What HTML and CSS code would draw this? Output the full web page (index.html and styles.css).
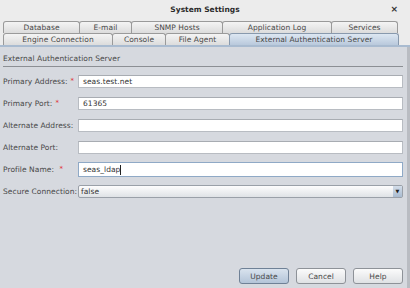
FILE: index.html
```html
<!DOCTYPE html>
<html>
<head>
<meta charset="utf-8">
<title>System Settings</title>
<link rel="stylesheet" href="styles.css">
</head>
<body>
<div class="win">
	<div class="titlebar">
		<span class="title">System Settings</span>
		<span class="close">&times;</span>
	</div>
	<div class="tabs">
		<div class="tabrow">
			<div class="tab" style="width:77px">Database</div>
			<div class="tab" style="width:53px">E-mail</div>
			<div class="tab" style="width:92px">SNMP Hosts</div>
			<div class="tab" style="width:110px">Application Log</div>
			<div class="tab" style="width:67px">Services</div>
		</div>
		<div class="tabrow">
			<div class="tab" style="width:110px">Engine Connection</div>
			<div class="tab" style="width:54px">Console</div>
			<div class="tab" style="width:65px">File Agent</div>
			<div class="tab sel" style="width:170px">External Authentication Server</div>
		</div>
	</div>
	<div class="panel">
		<div class="heading">External Authentication Server</div>
		<div class="form">
			<label>Primary Address:<span class="req">*</span></label>
			<div class="field">seas.test.net</div>
			<label>Primary Port:<span class="req">*</span></label>
			<div class="field">61365</div>
			<label>Alternate Address:</label>
			<div class="field"></div>
			<label>Alternate Port:</label>
			<div class="field"></div>
			<label>Profile Name: <span class="req">*</span></label>
			<div class="field focus">seas_ldap<span class="caret"></span></div>
			<label>Secure Connection:</label>
			<div class="combo">false<span class="arrow">&#9660;</span></div>
		</div>
		<div class="buttons">
			<button class="btn def">Update</button>
			<button class="btn">Cancel</button>
			<button class="btn">Help</button>
		</div>
	</div>
</div>
</body>
</html>
```
FILE: styles.css
```css
html, body {
	margin: 0;
	padding: 0;
}
body {
	width: 410px;
	height: 288px;
	overflow: hidden;
	font-family: "DejaVu Sans", sans-serif;
	font-size: 7.5px;
	letter-spacing: 0.05px;
	color: #444;
	background: #ececec;
}
.win {
	height: 288px;
	display: flex;
	flex-direction: column;
}
.titlebar {
	height: 20px;
	position: relative;
	display: flex;
	align-items: center;
	justify-content: center;
	background: #ececec;
}
.title {
	font-weight: bold;
	font-size: 7.5px;
	letter-spacing: 0;
	color: #2a2a2a;
	margin-top: -2px;
}
.close {
	position: absolute;
	right: 12px;
	top: 4px;
	font-size: 9px;
	font-weight: bold;
	color: #333;
}
.tabs {
	padding: 1px 0 0 3px;
	border-bottom: 2px solid #a9bbd0;
}
.tabrow {
	display: flex;
	height: 12px;
}
.tab {
	box-sizing: border-box;
	height: 12px;
	border: 1px solid #9a9a9a;
	border-bottom: none;
	border-radius: 3px 3px 0 0;
	background: linear-gradient(#f4f4f4, #dcdcdc);
	text-align: center;
	line-height: 11px;
	color: #484848;
	margin-right: -1px;
	white-space: nowrap;
}
.tab.sel {
	background: linear-gradient(#dde7f2, #b9c9dc);
	border-color: #8899ad;
}
.panel {
	flex: 1;
	background: #d6d9df;
	border-right: 3px solid #b9bcc2;
	padding: 0 4px 0 3px;
	display: flex;
	flex-direction: column;
}
.heading {
	height: 19px;
	line-height: 23px;
	border-bottom: 1px solid #8c8f94;
	color: #484848;
	margin-bottom: 8px;
}
.form {
	display: grid;
	grid-template-columns: 75px 1fr;
	row-gap: 9px;
	align-items: center;
}
label {
	color: #484848;
	white-space: nowrap;
}
.req {
	color: #e03030;
	margin-left: 3px;
	font-size: 7px;
	vertical-align: top;
}
.field {
	box-sizing: border-box;
	height: 13px;
	background: #fff;
	border: 1px solid #b8bcc2;
	border-top-color: #a8acb2;
	padding-left: 4px;
	line-height: 11px;
	color: #333;
}
.field.focus {
	height: 15px;
	border: 1px solid #8fa9c6;
	line-height: 13px;
	margin: -1px 0;
}
.caret {
	display: inline-block;
	width: 1px;
	height: 10px;
	background: #222;
	vertical-align: middle;
}
.combo {
	box-sizing: border-box;
	height: 13px;
	border: 1px solid #9aa0a8;
	border-radius: 2px;
	background: linear-gradient(#fdfdfd, #dfe2e6);
	padding-left: 2px;
	line-height: 11px;
	position: relative;
	color: #333;
}
.arrow {
	position: absolute;
	right: 0;
	top: 0;
	width: 9px;
	height: 11px;
	background: linear-gradient(#d3dde9, #a9bbd0);
	font-size: 5px;
	letter-spacing: 0;
	text-align: center;
	line-height: 11px;
	color: #222;
}
.buttons {
	margin-top: auto;
	margin-bottom: 4px;
	display: flex;
	justify-content: flex-end;
	gap: 7px;
}
.btn {
	box-sizing: border-box;
	width: 50px;
	height: 16px;
	font-family: "DejaVu Sans", sans-serif;
	font-size: 7.5px;
	letter-spacing: 0.05px;
	color: #484848;
	border: 1px solid #8e9298;
	border-radius: 3px;
	background: linear-gradient(#fbfbfb, #dfe1e4);
	padding: 0;
}
.btn.def {
	background: linear-gradient(#d9e3ee, #b3c4d8);
	border-color: #6f8196;
}
```
